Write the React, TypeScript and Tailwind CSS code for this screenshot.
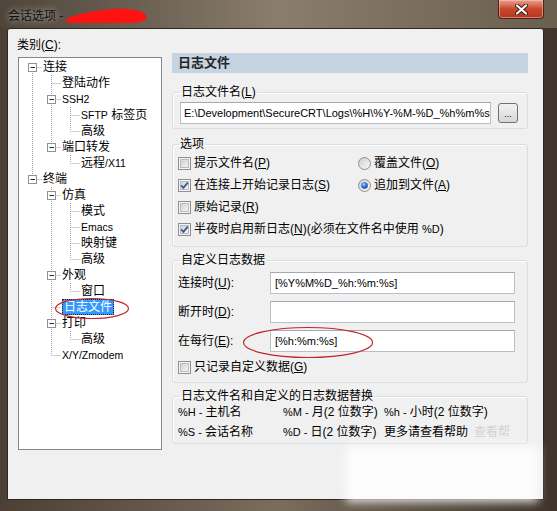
import React from 'react'

type N = {
  t: string
  d: number
  anc: boolean[]
  top: boolean
  bot: boolean
  box?: boolean
  sel?: boolean
  latin?: string
}

const TREE: N[] = [
  { t: '连接', d: 0, anc: [], top: false, bot: true, box: true },
  { t: '登陆动作', d: 1, anc: [true], top: true, bot: true },
  { t: '', latin: 'SSH2', d: 1, anc: [true], top: true, bot: true, box: true },
  { t: ' 标签页', latin: 'SFTP', d: 2, anc: [true, true], top: true, bot: true },
  { t: '高级', d: 2, anc: [true, true], top: true, bot: false },
  { t: '端口转发', d: 1, anc: [true], top: true, bot: false, box: true },
  { t: '远程', latin: '/X11', d: 2, anc: [true, false], top: true, bot: false },
  { t: '终端', d: 0, anc: [], top: true, bot: false, box: true },
  { t: '仿真', d: 1, anc: [false], top: true, bot: true, box: true },
  { t: '模式', d: 2, anc: [false, true], top: true, bot: true },
  { t: '', latin: 'Emacs', d: 2, anc: [false, true], top: true, bot: true },
  { t: '映射键', d: 2, anc: [false, true], top: true, bot: true },
  { t: '高级', d: 2, anc: [false, true], top: true, bot: false },
  { t: '外观', d: 1, anc: [false], top: true, bot: true, box: true },
  { t: '窗口', d: 2, anc: [false, true], top: true, bot: false },
  { t: '日志文件', d: 1, anc: [false], top: true, bot: true, sel: true },
  { t: '打印', d: 1, anc: [false], top: true, bot: true, box: true },
  { t: '高级', d: 2, anc: [false, true], top: true, bot: false },
  { t: '', latin: 'X/Y/Zmodem', d: 1, anc: [false], top: true, bot: false },
]

const DOT = { stroke: '#a0a0a0', strokeDasharray: '1 1' }

function Label({ n }: { n: N }) {
  if (!n.latin) return <>{n.t}</>
  const lat = <span className="text-[10.5px]">{n.latin}</span>
  // 远程/X11 puts the latin part after the CJK text
  return n.t === '远程' ? (
    <>
      {n.t}
      {lat}
    </>
  ) : (
    <>
      {lat}
      {n.t}
    </>
  )
}

function TreeRow({ n }: { n: N }) {
  const w = (n.d + 1) * 19
  const c = n.d * 19 + 9.5
  return (
    <div className="flex h-[16px] items-center">
      <svg width={w} height={16} className="shrink-0">
        {n.anc.map((on, i) =>
          on ? <line key={i} x1={i * 19 + 9.5} y1={0} x2={i * 19 + 9.5} y2={16} {...DOT} /> : null
        )}
        {n.top && <line x1={c} y1={0} x2={c} y2={8} {...DOT} />}
        {n.bot && <line x1={c} y1={8} x2={c} y2={16} {...DOT} />}
        <line x1={c} y1={8.5} x2={c + 9} y2={8.5} {...DOT} />
        {n.box && (
          <g>
            <rect x={c - 4} y={4.5} width={8} height={8} fill="#fff" stroke="#919191" />
            <line x1={c - 2} y1={8.5} x2={c + 2.5} y2={8.5} stroke="#2b2b2b" />
          </g>
        )}
      </svg>
      {n.sel ? (
        <span className="ml-[1px] h-[16px] px-[1px] leading-[14px] bg-[#3399ff] text-white border border-dotted border-[#222]">
          {n.t}
        </span>
      ) : (
        <span className="ml-[1px] leading-[16px] whitespace-pre">
          <Label n={n} />
        </span>
      )}
    </div>
  )
}

function Key({ k }: { k: string }) {
  return (
    <>
      (<u>{k}</u>)
    </>
  )
}

function L({ children }: { children: React.ReactNode }) {
  return <span className="text-[11px]">{children}</span>
}

function CheckBox({ on }: { on?: boolean }) {
  return (
    <svg width={13} height={13} className="shrink-0">
      <defs>
        <linearGradient id="cbg" x1="0" y1="0" x2="1" y2="1">
          <stop offset="0" stopColor="#cbcfd5" />
          <stop offset="1" stopColor="#f7f7f7" />
        </linearGradient>
      </defs>
      <rect x={0.5} y={0.5} width={12} height={12} fill="#f4f4f4" stroke="#8f8f8f" />
      <rect x={2.5} y={2.5} width={8} height={8} fill="url(#cbg)" stroke="#b8bcc2" />
      {on && <path d="M3.2 6.4 L5.4 8.8 L9.8 3.6" fill="none" stroke="#3b5b8f" strokeWidth={1.8} />}
    </svg>
  )
}

function Radio({ on }: { on?: boolean }) {
  return (
    <svg width={13} height={13} className="shrink-0">
      <defs>
        <linearGradient id="rbg" x1="0" y1="0" x2="1" y2="1">
          <stop offset="0" stopColor="#c9ccd1" />
          <stop offset="1" stopColor="#fbfbfb" />
        </linearGradient>
        <radialGradient id="rdot" cx="0.4" cy="0.35" r="0.7">
          <stop offset="0" stopColor="#a8d4ff" />
          <stop offset="0.5" stopColor="#2a7ad8" />
          <stop offset="1" stopColor="#0f3f86" />
        </radialGradient>
      </defs>
      <circle cx={6.5} cy={6.5} r={6} fill="url(#rbg)" stroke="#8f8f8f" />
      {on && <circle cx={6.5} cy={6.5} r={3.3} fill="url(#rdot)" />}
    </svg>
  )
}

function Field({ children, w }: { children?: React.ReactNode; w: string }) {
  return (
    <div
      className={`${w} h-[22px] shrink-0 flex items-center bg-white border border-[#b9c0c9] border-t-[#a3a9b2] pl-[4px] whitespace-nowrap overflow-hidden text-[11px]`}
    >
      {children}
    </div>
  )
}

export default function App() {
  return (
    <div className="relative w-[557px] h-[511px] flex flex-col overflow-hidden bg-linear-to-r from-[#4c4034] via-[#7a6d5e] to-[#3e342a] text-[12px] text-black font-[Liberation_Sans,Noto_Sans_CJK_SC,sans-serif]">
      {/* title bar */}
      <div className="h-[28px] shrink-0 flex items-start justify-between pl-[8px] pr-[13px] bg-linear-to-r from-[#4f453a] via-[#8a7d6d] to-[#6a5e4f]">
        <div className="mt-[7px] flex items-center leading-[16px] text-[#111] [text-shadow:0_0_6px_rgba(255,255,255,0.7)]">
          <span>会话选项 -</span>
          <svg width={86} height={18} className="ml-[1px]">
            <path
              d="M2 12 C 10 8, 30 3, 50 2 C 66 1, 78 3, 82 8 C 85 13, 78 16, 64 16 C 46 16, 26 16, 12 16 C 5 16, 0 15, 2 12 Z"
              fill="#ff1212"
            />
          </svg>
        </div>
        <div className="w-[46px] h-[19px] rounded-b-[4px] border border-t-0 border-[#4e2419] bg-linear-to-b from-[#e9a08d] via-[#c9452c] to-[#b7361f] flex items-center justify-center shadow-[inset_0_0_0_1px_rgba(255,220,200,0.45)]">
          <svg width={13} height={11}>
            <path d="M2 1.5 L11 9.5 M11 1.5 L2 9.5" stroke="#3a1a12" strokeWidth={4} strokeLinecap="round" />
            <path d="M2 1.5 L11 9.5 M11 1.5 L2 9.5" stroke="#ffffff" strokeWidth={2.2} strokeLinecap="round" />
          </svg>
        </div>
      </div>

      {/* client area */}
      <div className="relative flex-1 ml-[7px] mr-[13px] mb-[11px] bg-[#f0f0f0] border border-[#2e271f] rounded-t-[3px] flex items-start pl-[10px]">
        {/* category tree */}
        <div className="flex flex-col pt-[8px]">
          <div className="-ml-[1px] h-[16px] leading-[16px]">
            类别(<u>C</u>):
          </div>
          <div className="mt-[4px] w-[144px] h-[393px] bg-white border border-[#828790] pl-[4px] pt-[1px]">
            {TREE.map((n, i) => (
              <TreeRow key={i} n={n} />
            ))}
          </div>
        </div>

        {/* settings page */}
        <div className="ml-[10px] mt-[24px] w-[356px] flex flex-col">
          <div className="h-[20px] bg-[#c5d4e0] pl-[6px] flex items-center text-[13px] font-bold text-[#262626]">
            日志文件
          </div>

          <fieldset className="mt-[11px] border border-[#d5dfe5] rounded-[3px] pb-[4px] shadow-[inset_1px_1px_0_#fff]">
            <legend className="ml-[7px] px-[1px] leading-[16px]">
              日志文件名<Key k="L" />
            </legend>
            <div className="mt-[2px] pl-[7px] flex items-center">
              <Field w="w-[311px]">
                <span className="-ml-[1px]">E:\Development\SecureCRT\Logs\%H\%Y-%M-%D_%h%m%s</span>
              </Field>
              <div className="ml-[7px] w-[20px] h-[20px] rounded-[3px] border border-[#707070] bg-linear-to-b from-[#f3f3f3] to-[#d6d6d6] flex items-end justify-center pb-[3px] text-[9px] leading-[9px]">
                ...
              </div>
            </div>
          </fieldset>

          <fieldset className="mt-[7px] border border-[#d5dfe5] rounded-[3px] pl-[5px] pb-[6px] shadow-[inset_1px_1px_0_#fff]">
            <legend className="ml-[1px] px-[1px] leading-[16px]">选项</legend>
            <div className="h-[22px] flex items-center">
              <div className="w-[180px] flex items-center gap-[3px]">
                <CheckBox />
                <span>
                  提示文件名<Key k="P" />
                </span>
              </div>
              <div className="flex items-center gap-[3px]">
                <Radio />
                <span>
                  覆盖文件<Key k="O" />
                </span>
              </div>
            </div>
            <div className="h-[22px] flex items-center">
              <div className="w-[180px] flex items-center gap-[3px]">
                <CheckBox on />
                <span>
                  在连接上开始记录日志<Key k="S" />
                </span>
              </div>
              <div className="flex items-center gap-[3px]">
                <Radio on />
                <span>
                  追加到文件<Key k="A" />
                </span>
              </div>
            </div>
            <div className="h-[22px] flex items-center gap-[3px]">
              <CheckBox />
              <span>
                原始记录<Key k="R" />
              </span>
            </div>
            <div className="h-[22px] flex items-center gap-[3px]">
              <CheckBox on />
              <span>
                半夜时启用新日志<Key k="N" />(必须在文件名中使用 <L>%D</L>)
              </span>
            </div>
          </fieldset>

          <fieldset className="mt-[5px] border border-[#d5dfe5] rounded-[3px] pl-[5px] pr-[11px] pb-[7px] shadow-[inset_1px_1px_0_#fff]">
            <legend className="ml-[2px] px-[1px] leading-[16px]">自定义日志数据</legend>
            <div className="pt-[4px] flex flex-col gap-[7px]">
              <div className="flex items-center">
                <span className="w-[92px] shrink-0">
                  连接时<Key k="U" />:
                </span>
                <Field w="w-[245px]">[%Y%M%D_%h:%m:%s]</Field>
              </div>
              <div className="flex items-center">
                <span className="w-[92px] shrink-0">
                  断开时<Key k="D" />:
                </span>
                <Field w="w-[245px]" />
              </div>
              <div className="flex items-center">
                <span className="w-[92px] shrink-0">
                  在每行<Key k="E" />:
                </span>
                <Field w="w-[245px]">[%h:%m:%s]</Field>
              </div>
              <div className="h-[16px] flex items-center gap-[3px]">
                <CheckBox />
                <span>
                  只记录自定义数据<Key k="G" />
                </span>
              </div>
            </div>
          </fieldset>

          <fieldset className="mt-[6px] border border-[#d5dfe5] rounded-[3px] pl-[5px] pb-[2px] shadow-[inset_1px_1px_0_#fff]">
            <legend className="ml-[2px] px-[1px] leading-[14px]">日志文件名和自定义的日志数据替换</legend>
            <div className="flex flex-col gap-[2px]">
              <div className="h-[18px] flex items-center whitespace-pre">
                <span className="w-[105px] shrink-0">
                  <L>%H - </L>主机名
                </span>
                <span className="w-[101px] shrink-0">
                  <L>%M - </L>月(2 位数字)
                </span>
                <span>
                  <L>%h - </L>小时(2 位数字)
                </span>
              </div>
              <div className="h-[18px] flex items-center whitespace-pre">
                <span className="w-[105px] shrink-0">
                  <L>%S - </L>会话名称
                </span>
                <span className="w-[101px] shrink-0">
                  <L>%D - </L>日(2 位数字)
                </span>
                <span>更多请查看帮助</span>
                <span className="ml-[6px] text-[#d2d2d2]">查看帮</span>
              </div>
            </div>
          </fieldset>
        </div>

        {/* watermark smudge */}
        <div className="absolute left-[338px] top-[417px] w-[192px] h-[56px] bg-white/85 blur-[5px]" />
      </div>

      {/* red annotation rings */}
      <svg className="absolute left-[54px] top-[297px]" width={76} height={23}>
        <ellipse cx={38} cy={11.5} rx={36.5} ry={10} fill="none" stroke="#c0272d" strokeWidth={1.2} />
      </svg>
      <svg className="absolute left-[242px] top-[326px]" width={132} height={33}>
        <ellipse cx={66} cy={16.5} rx={64.5} ry={15} fill="none" stroke="#c0272d" strokeWidth={1.2} />
      </svg>
    </div>
  )
}
